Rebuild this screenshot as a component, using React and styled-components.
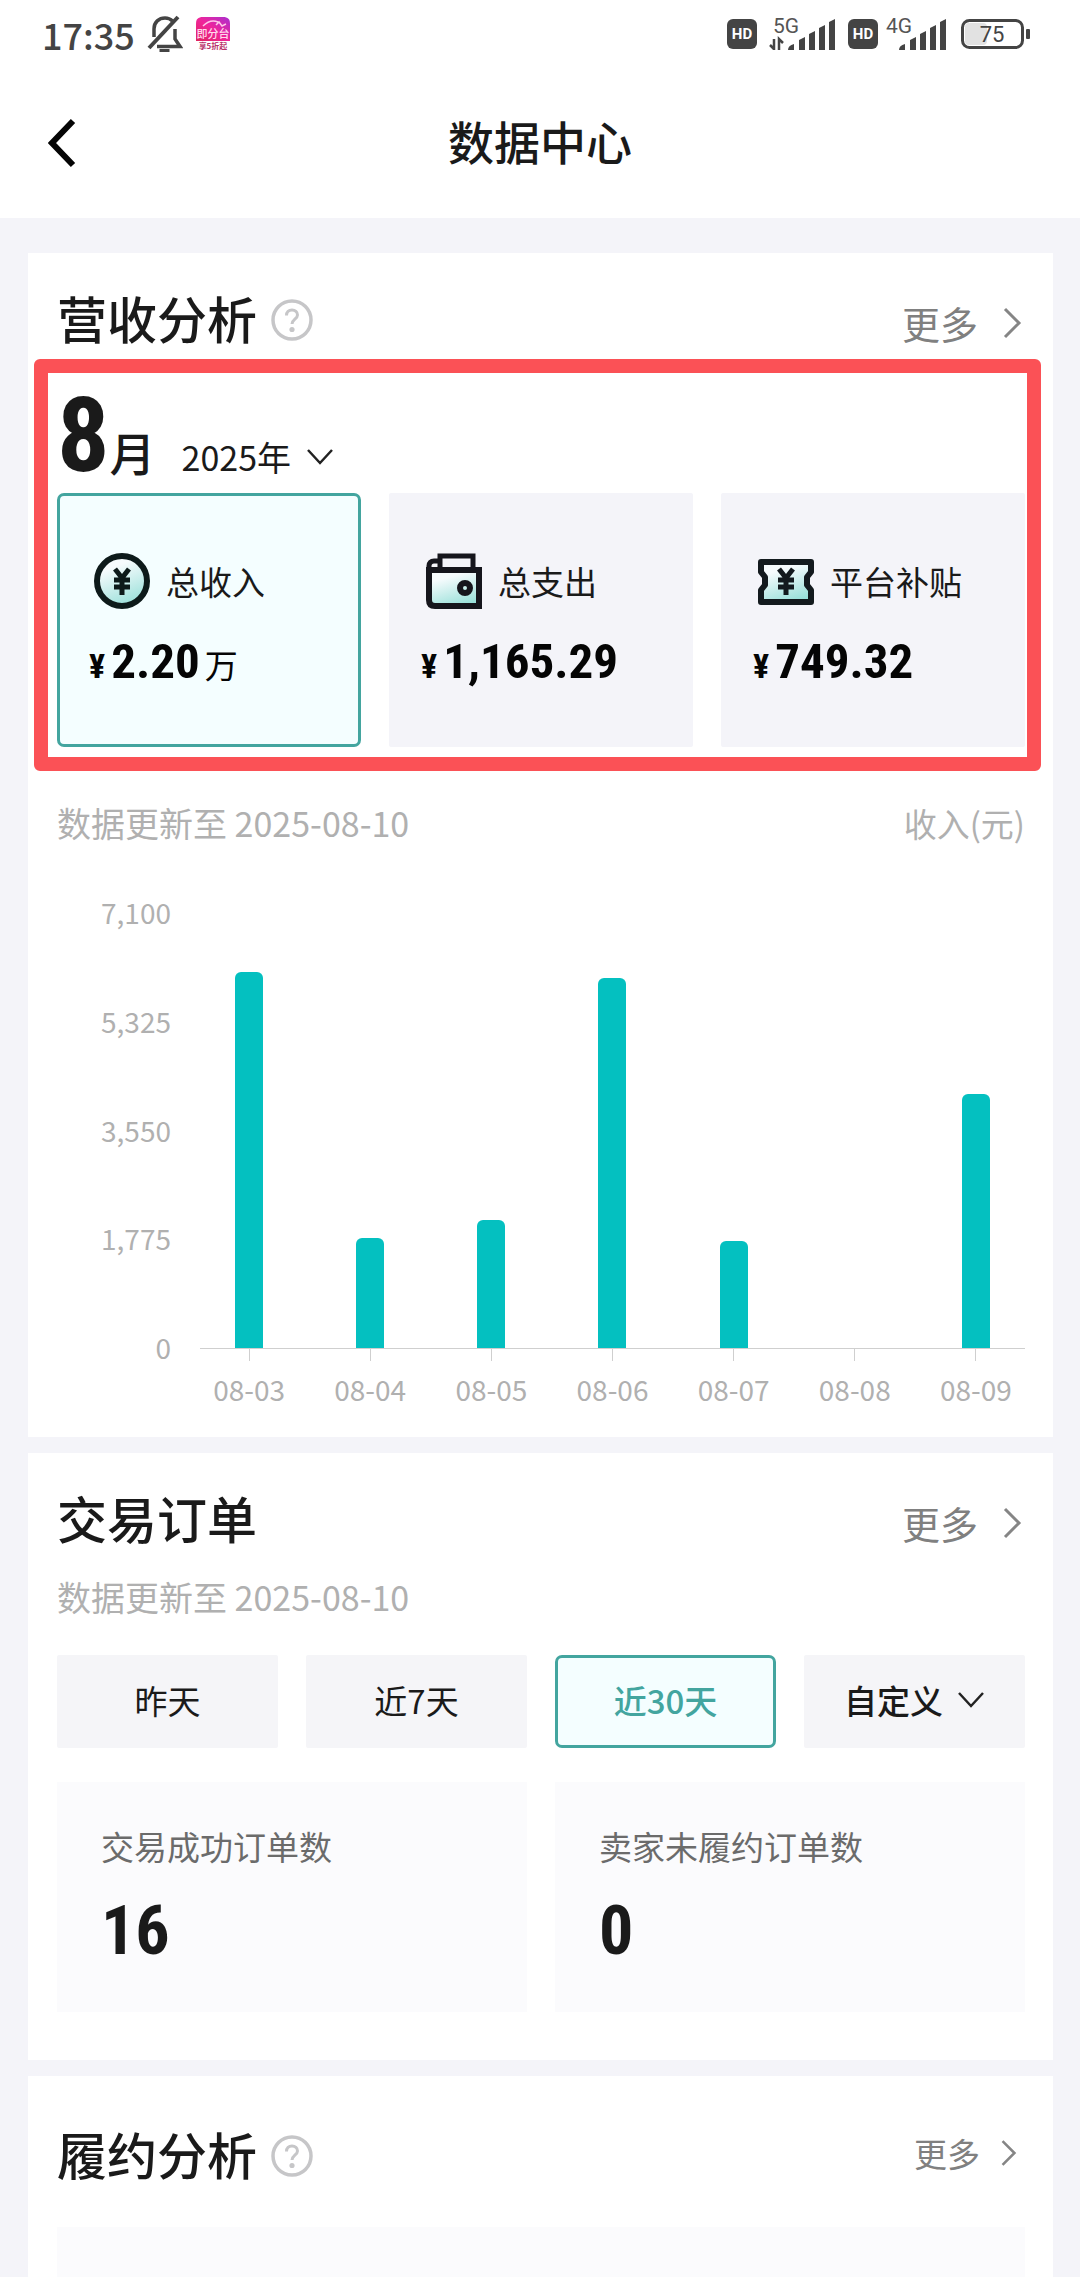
import { useState } from "react";
import styled, { createGlobalStyle } from "styled-components";

const revenueStats = [
  { id: "income", label: "总收入", value: "2.20", unit: "万", Icon: CoinIcon },
  { id: "expense", label: "总支出", value: "1,165.29", Icon: WalletIcon },
  { id: "subsidy", label: "平台补贴", value: "749.32", Icon: TicketIcon },
];

const chartMax = 7100;
const chartTicks = ["7,100", "5,325", "3,550", "1,775", "0"];
const chartData = [
  { date: "08-03", value: 6137 },
  { date: "08-04", value: 1795 },
  { date: "08-05", value: 2089 },
  { date: "08-06", value: 6039 },
  { date: "08-07", value: 1746 },
  { date: "08-08", value: 0 },
  { date: "08-09", value: 4146 },
];

const ranges = [
  { id: "yesterday", label: "昨天" },
  { id: "week", label: "近7天" },
  { id: "month", label: "近30天" },
  { id: "custom", label: "自定义", menu: true },
];

const orderStats = [
  { label: "交易成功订单数", value: "16" },
  { label: "卖家未履约订单数", value: "0" },
];

const App = () => {
  const [stat, setStat] = useState("income");
  const [range, setRange] = useState("month");

  return (
    <Page>
      <GlobalStyle />
      <Header>
        <StatusBar />
        <NavBar>
          <BackButton type='button' aria-label='返回'>
            <svg width='28' height='50' viewBox='0 0 28 50'>
              <path d='M25 3 4 25l21 22' fill='none' stroke='#050505' strokeWidth='6' />
            </svg>
          </BackButton>
          <h1>数据中心</h1>
        </NavBar>
      </Header>

      <Main>
        <Card>
          <CardHead title='营收分析' help />
          <Highlight>
            <Period>
              <strong>8</strong>
              <span>月</span>
              <YearPicker>
                <select aria-label='年份' defaultValue='2025'>
                  <option value='2025'>2025年</option>
                </select>
                <ChevronDown />
              </YearPicker>
            </Period>
            <StatGrid>
              {revenueStats.map(({ id, label, value, unit, Icon }) => (
                <StatCard
                  key={id}
                  type='button'
                  $active={stat === id}
                  onClick={() => setStat(id)}
                >
                  <StatLabel>
                    <Icon />
                    {label}
                  </StatLabel>
                  <Amount>
                    <small>¥</small>
                    <b>{value}</b>
                    {unit && <i>{unit}</i>}
                  </Amount>
                </StatCard>
              ))}
            </StatGrid>
          </Highlight>
          <Note $gap={28}>
            <span>数据更新至 2025-08-10</span>
            <Unit>收入(元)</Unit>
          </Note>
          <IncomeChart />
        </Card>

        <Card $bottom={48}>
          <CardHead title='交易订单' />
          <Note $gap={30}>数据更新至 2025-08-10</Note>
          <RangeRow>
            {ranges.map(({ id, label, menu }) => (
              <RangeButton
                key={id}
                type='button'
                $active={range === id}
                $strong={menu}
                onClick={() => setRange(id)}
              >
                {label}
                {menu && <ChevronDown />}
              </RangeButton>
            ))}
          </RangeRow>
          <OrderGrid>
            {orderStats.map(({ label, value }) => (
              <OrderBox key={label}>
                <dt>{label}</dt>
                <dd>{value}</dd>
              </OrderBox>
            ))}
          </OrderGrid>
        </Card>

        <Card $top={50} $bottom={0} $grow>
          <CardHead title='履约分析' help small />
          <Placeholder />
        </Card>
      </Main>
    </Page>
  );
};

const CardHead = ({ title, help, small }) => (
  <HeadRow $align={small ? "center" : "baseline"}>
    <HeadTitle>
      <h2>{title}</h2>
      {help && (
        <HelpButton type='button' aria-label='说明'>
          <svg width='42' height='42' viewBox='0 0 42 42' fill='none' stroke='#c6c6c8'>
            <circle cx='21' cy='21' r='19' strokeWidth='3.500' />
            <path d='M15.500 16.500c0-3.500 2.300-5.500 5.500-5.500s5.500 2 5.500 5c0 4-5.500 4.500-5.500 9' strokeWidth='3' />
            <circle cx='21' cy='30.500' r='2.600' fill='#c6c6c8' stroke='none' />
          </svg>
        </HelpButton>
      )}
    </HeadTitle>
    <MoreLink href='#more' $small={small}>
      更多
      <svg width={small ? 17 : 20} height={small ? 28 : 32} viewBox='0 0 20 32'>
        <path d='M3 2l14 14L3 30' fill='none' stroke='#858585' strokeWidth='3' />
      </svg>
    </MoreLink>
  </HeadRow>
);

const IncomeChart = () => (
  <Chart>
    <YAxis>
      {chartTicks.map((tick) => (
        <span key={tick}>{tick}</span>
      ))}
    </YAxis>
    <Plot>
      <Bars>
        {chartData.map(({ date, value }) => (
          <Bar key={date} style={{ height: `${(value / chartMax) * 100}%` }} />
        ))}
      </Bars>
      <XAxis>
        {chartData.map(({ date }) => (
          <span key={date}>{date}</span>
        ))}
      </XAxis>
    </Plot>
  </Chart>
);

const StatusBar = () => (
  <StatusRow>
    <StatusGroup $gap={12}>
      <time>17:35</time>
      <svg width='36' height='38' viewBox='0 0 36 38' fill='none' stroke='#444' strokeWidth='3.500'>
        <path d='M7 22V14C7 7 12 3 18 3c3 0 5.500 1 7.500 3' />
        <path d='M2 33 31 2' strokeWidth='4' />
        <path d='M10 31.500h23L28 24V14' />
        <path d='M12.500 35.500h10' strokeWidth='3' />
      </svg>
      <svg width='36' height='36' viewBox='0 0 36 36'>
        <defs>
          <linearGradient id='badge' x1='0' y1='1' x2='1' y2='0'>
            <stop offset='0' stopColor='#e0245e' />
            <stop offset='0.500' stopColor='#f0259a' />
            <stop offset='1' stopColor='#a92fd0' />
          </linearGradient>
        </defs>
        <path d='M1 25V8c0-5 2-7 7-7h20c5 0 7 2 7 7v17z' fill='url(#badge)' />
        <path d='M8 10c5-5 10-6 15-4m-2 3 3-3 3 4 4-2' fill='none' stroke='#ffc9e8' strokeWidth='1.500' />
        <text x='18' y='22' fontSize='11' fontWeight='500' textAnchor='middle' fill='#ffd9ec'>即分台</text>
        <text x='18' y='33' fontSize='8' fontWeight='700' textAnchor='middle' fill='#b8326a'>享5折起</text>
      </svg>
    </StatusGroup>
    <StatusGroup $gap={7}>
      <HdIcon />
      <Signal label='5G' data />
      <HdIcon />
      <Signal label='4G' />
      <svg width='70' height='30' viewBox='0 0 70 30'>
        <rect x='4' y='4' width='22' height='22' rx='4' fill='#e2e2e2' />
        <rect x='1.500' y='1.500' width='60' height='27' rx='7' fill='none' stroke='#444' strokeWidth='3' />
        <rect x='65' y='10' width='4' height='10' rx='1' fill='#444' />
        <StatusText x='31' y='23' fontSize='22' textAnchor='middle' fill='#444'>75</StatusText>
      </svg>
    </StatusGroup>
  </StatusRow>
);

const HdIcon = () => (
  <svg width='30' height='30' viewBox='0 0 30 30'>
    <rect width='30' height='30' rx='6' fill='#444' />
    <StatusText x='15' y='20' fontSize='15' fontWeight='700' textAnchor='middle' fill='#fff'>HD</StatusText>
  </svg>
);

const Signal = ({ label, data }) => (
  <svg width={data ? 77 : 69} height='46' viewBox={data ? "-6 -7 77 46" : "4 -7 69 46"}>
    <StatusText x={data ? 3 : 5} y='15' fontSize='21' fill='#555'>{label}</StatusText>
    {data && (
      <path d='M4 21v11M0 27l4 4M9 32V21l4 4' fill='none' stroke='#444' strokeWidth='2.500' />
    )}
    <g fill='#444'>
      <path d='M18 32c0-3 2-5 6-6v6z' />
      <path d='M29 32V22l6-3v13z' />
      <path d='M39 32V16l6-3v19z' />
      <path d='M49 32V10l6-3v25z' />
      <path d='M59 32V4l6-3v31z' />
    </g>
  </svg>
);

const ChevronDown = () => (
  <svg width='28' height='18' viewBox='0 0 28 18'>
    <path d='M2 2l12 13L26 2' fill='none' stroke='#222' strokeWidth='2.500' />
  </svg>
);

// shared fade used inside the three revenue icons
const Fade = ({ id }) => (
  <defs>
    <linearGradient id={id} x1='0.300' y1='0' x2='0.700' y2='1'>
      <stop offset='0.200' stopColor='#f6fbfd' />
      <stop offset='1' stopColor='#96dfd8' />
    </linearGradient>
  </defs>
);

const yenPath = "M21 16l7 9 7-9M20 27h16M20 34h16M28 25v17";

function CoinIcon() {
  return (
    <svg width='56' height='56' viewBox='0 0 56 56' fill='none' stroke='#0d1a1a'>
      <Fade id='coin' />
      <circle cx='28' cy='28' r='25' fill='url(#coin)' strokeWidth='6' />
      <path d={yenPath} strokeWidth='5' />
    </svg>
  );
}

function WalletIcon() {
  return (
    <svg width='56' height='56' viewBox='0 0 56 56' fill='none' stroke='#15151c' strokeWidth='6'>
      <Fade id='wallet' />
      <path d='M3 17h50v36H9c-4 0-6-2-6-6z' fill='url(#wallet)' />
      <path d='M3 19v-6c0-3 2-5 5-5h6M14 15V3h33v13' strokeWidth='5' />
      <circle cx='39' cy='35' r='5' />
    </svg>
  );
}

function TicketIcon() {
  return (
    <svg width='56' height='56' viewBox='0 0 56 56' fill='none' stroke='#131a1e' strokeWidth='5'>
      <Fade id='ticket' />
      <path d='M3 9h50v10l-4 5v8l4 5v12H3V37l4-5v-8l-4-5z' fill='url(#ticket)' strokeLinejoin='round' strokeWidth='6' />
      <path d={yenPath} />
    </svg>
  );
}

const GlobalStyle = createGlobalStyle`
  * {
    box-sizing: border-box;
  }
  body {
    margin: 0;
    background: #f4f4f9;
    color: #1a1a1a;
    font-family: "Noto Sans CJK SC", sans-serif;
  }
  h1, h2, dl, dd {
    margin: 0;
  }
  button, select {
    border: 0;
    padding: 0;
    background: none;
    color: inherit;
    font: inherit;
  }
  svg {
    display: block;
    flex: none;
  }
`;

const digits = `"Roboto Condensed", "Liberation Sans", sans-serif`;
const teal = "#43a59f";

const Page = styled.div`
  min-height: 100vh;
  display: flex;
  flex-direction: column;
`;

const Header = styled.header`
  background: #fff;
`;

const StatusRow = styled.div`
  height: 68px;
  padding: 0 49px 0 42px;
  display: flex;
  align-items: center;
  justify-content: space-between;
`;

const StatusGroup = styled.div`
  display: flex;
  align-items: center;
  gap: ${({ $gap }) => $gap}px;
  time {
    font-size: 36px;
    line-height: 56px;
    font-weight: 500;
    color: #444;
  }
`;

const StatusText = styled.text`
  font-family: Roboto, sans-serif;
`;

const NavBar = styled.nav`
  height: 150px;
  padding: 0 48px;
  display: grid;
  grid-template-columns: 60px 1fr 60px;
  align-items: center;
  h1 {
    padding-bottom: 6px;
    font-size: 46px;
    line-height: 60px;
    font-weight: 500;
    text-align: center;
  }
`;

const BackButton = styled.button`
  justify-self: start;
`;

const Main = styled.main`
  flex: 1;
  padding: 35px 27px 0 28px;
  display: flex;
  flex-direction: column;
  gap: 16px;
`;

const Card = styled.section`
  padding: ${({ $top = 37 }) => $top}px 28px ${({ $bottom = 28 }) => $bottom}px 29px;
  background: #fff;
  display: flex;
  flex-direction: column;
  flex: ${({ $grow }) => ($grow ? "1" : "none")};
`;

const HeadRow = styled.div`
  display: flex;
  justify-content: space-between;
  align-items: ${({ $align }) => $align};
  height: 53px;
`;

const HeadTitle = styled.div`
  display: flex;
  align-items: center;
  gap: 14px;
  h2 {
    font-size: 50px;
    line-height: 54px;
    font-weight: 500;
  }
`;

const HelpButton = styled.button`
  padding-top: 6px;
`;

const MoreLink = styled.a`
  display: flex;
  align-items: center;
  gap: ${({ $small }) => ($small ? 20 : 24)}px;
  padding-right: ${({ $small }) => ($small ? 8 : 3)}px;
  color: #808080;
  font-size: ${({ $small }) => ($small ? 33 : 38)}px;
  line-height: 48px;
  text-decoration: none;
`;

const Highlight = styled.div`
  margin: 16px -16px 0 -23px;
  border: 14px solid #fb5156;
  border-radius: 6px;
  padding: 0 2px 10px 9px;
`;

const Period = styled.div`
  display: flex;
  align-items: baseline;
  height: 120px;
  padding-top: 8px;
  strong {
    font-family: ${digits};
    font-size: 104px;
    line-height: 110px;
  }
  > span {
    margin-right: 26px;
    font-size: 46px;
    line-height: 48px;
    font-weight: 500;
  }
`;

const YearPicker = styled.label`
  display: flex;
  align-items: center;
  gap: 14px;
  select {
    appearance: none;
    font-size: 34px;
    line-height: 48px;
  }
`;

const StatGrid = styled.div`
  display: grid;
  grid-template-columns: repeat(3, 1fr);
  gap: 28px;
`;

const StatCard = styled.button`
  display: flex;
  flex-direction: column;
  gap: 26px;
  min-width: 0;
  padding: 57px 0 55px 29px;
  border: 3px solid ${({ $active }) => ($active ? teal : "#f4f4f9")};
  border-radius: ${({ $active }) => ($active ? 7 : 2)}px;
  background: ${({ $active }) => ($active ? "#f4feff" : "#f4f4f9")};
  text-align: left;
`;

const StatLabel = styled.span`
  display: flex;
  align-items: center;
  gap: 16px;
  height: 56px;
  padding-left: 5px;
  font-size: 33px;
  line-height: 54px;
  white-space: nowrap;
`;

const Amount = styled.span`
  display: flex;
  align-items: baseline;
  height: 54px;
  color: #050505;
  line-height: 54px;
  small {
    margin-right: 6px;
    font-family: ${digits};
    font-size: 34px;
    font-weight: 700;
  }
  b {
    font-family: ${digits};
    font-size: 49px;
  }
  i {
    margin-left: 5px;
    font-size: 33px;
    font-style: normal;
  }
`;

const Note = styled.div`
  display: flex;
  justify-content: space-between;
  margin-top: ${({ $gap }) => $gap}px;
  color: #b0b0b0;
  font-size: 34px;
  line-height: 48px;
`;

const Unit = styled.span`
  font-size: 33px;
`;

const Chart = styled.div`
  display: grid;
  grid-template-columns: 114px 1fr;
  gap: 29px;
  margin-top: 45px;
  color: #b0b0b0;
  font-size: 28px;
  line-height: 40px;
`;

const YAxis = styled.div`
  height: 475px;
  display: flex;
  flex-direction: column;
  justify-content: space-between;
  text-align: right;
`;

const Plot = styled.div`
  padding-top: 21px;
`;

const Bars = styled.div`
  height: 436px;
  display: grid;
  grid-template-columns: repeat(7, 1fr);
  column-gap: 23px;
  align-items: end;
  justify-items: center;
  border-bottom: 1px solid #cfcfcf;
`;

const Bar = styled.div`
  width: 28px;
  border-radius: 6px 6px 0 0;
  background: #04c0c0;
`;

const XAxis = styled.div`
  display: grid;
  grid-template-columns: repeat(7, 1fr);
  column-gap: 23px;
  text-align: center;
  span::before {
    content: "";
    display: block;
    width: 1px;
    height: 12px;
    margin: 0 auto 8px;
    background: #cfcfcf;
  }
`;

const RangeRow = styled.div`
  display: grid;
  grid-template-columns: repeat(4, 1fr);
  gap: 28px;
  margin-top: 34px;
`;

const RangeButton = styled.button`
  display: flex;
  align-items: center;
  justify-content: center;
  gap: 14px;
  height: 93px;
  padding-bottom: 3px;
  border: 3px solid ${({ $active }) => ($active ? teal : "#f5f5f8")};
  border-radius: ${({ $active }) => ($active ? 7 : 2)}px;
  background: ${({ $active }) => ($active ? "#f4feff" : "#f5f5f8")};
  color: ${({ $active }) => ($active ? teal : "#1a1a1a")};
  font-size: 33px;
  font-weight: ${({ $active, $strong }) => ($active || $strong ? 500 : 400)};
`;

const OrderGrid = styled.dl`
  display: grid;
  grid-template-columns: repeat(2, 1fr);
  gap: 28px;
  margin-top: 34px;
`;

const OrderBox = styled.div`
  padding: 40px 44px 43px;
  background: #fbfbfd;
  dt {
    color: #6b6b6b;
    font-size: 33px;
    line-height: 48px;
  }
  dd {
    margin-top: 23px;
    font-family: ${digits};
    font-size: 68px;
    line-height: 76px;
    font-weight: 700;
  }
`;

const Placeholder = styled.div`
  flex: 1;
  min-height: 48px;
  margin-top: 48px;
  background: #fbfbfd;
`;

export default App;
